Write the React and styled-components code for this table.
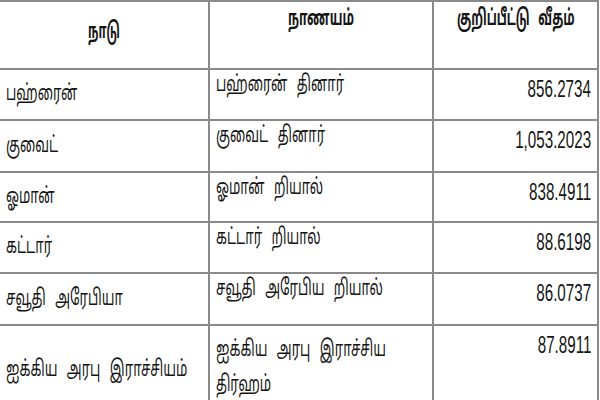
import React from "react";
import styled, { createGlobalStyle } from "styled-components";

const GlobalStyle = createGlobalStyle`
  html, body {
    margin: 0;
    padding: 0;
    background: #ffffff;
  }
  body {
    width: 600px;
    height: 400px;
    overflow: hidden;
  }
`;

const rows = [
  { country: "பஹ்ரைன்", currency: ["பஹ்ரைன் தினார்"], rate: "856.2734", h: 51 },
  { country: "குவைட்", currency: ["குவைட் தினார்"], rate: "1,053.2023", h: 52 },
  { country: "ஓமான்", currency: ["ஓமான் றியால்"], rate: "838.4911", h: 50 },
  { country: "கட்டார்", currency: ["கட்டார் றியால்"], rate: "88.6198", h: 51 },
  { country: "சவூதி அரேபியா", currency: ["சவூதி அரேபிய றியால்"], rate: "86.0737", h: 52 },
  {
    country: "ஐக்கிய அரபு இராச்சியம்",
    currency: ["ஐக்கிய அரபு இராச்சிய", "திர்ஹம்"],
    rate: "87.8911",
    h: 90,
  },
];

const justify = { left: "flex-start", center: "center", right: "flex-end" };

const Sheet = styled.div`
  width: 600px;
  height: 400px;
  overflow: hidden;
`;

const Table = styled.table`
  border-collapse: collapse;
  table-layout: fixed;
  width: 598px;
  font-family: "Noto Sans Tamil", "Lohit Tamil", "Noto Sans", sans-serif;
  color: #151515;
`;

const Cell = styled.td`
  border-top: 2px solid #8a8a8a;
  border-right: 2px solid #8a8a8a;
  padding: ${(p) => p.$pad || "0 6px"};
  vertical-align: ${(p) => p.$valign || "top"};
  font-size: 22px;
  line-height: ${(p) => p.$lh || 35}px;
`;

const HeadCell = styled(Cell).attrs({ as: "th" })`
  font-weight: bold;
  height: 60px;
`;

const Line = styled.div`
  display: flex;
  justify-content: ${(p) => justify[p.$align || "left"]};
  white-space: nowrap;
`;

const Text = styled.span`
  flex: none;
  display: inline-block;
  word-spacing: 10px;
  transform: scaleX(${(p) => p.$scale || 0.6});
  transform-origin: ${(p) => p.$align || "left"} center;
`;

const Rate = styled(Text)`
  font-family: "Liberation Sans", Arial, sans-serif;
  font-size: 23px;
`;

export default function App() {
  return (
    <Sheet>
      <GlobalStyle />
      <Table>
        <colgroup>
          <col style={{ width: 209 }} />
          <col style={{ width: 224 }} />
          <col style={{ width: 165 }} />
        </colgroup>
        <thead>
          <tr>
            <HeadCell $valign="middle" $pad="0 6px 6px">
              <Line $align="center">
                <Text $align="center" $scale={0.53}>நாடு</Text>
              </Line>
            </HeadCell>
            <HeadCell>
              <Line $align="center">
                <Text $align="center" $scale={0.56}>நாணயம்</Text>
              </Line>
            </HeadCell>
            <HeadCell>
              <Line $align="center">
                <Text $align="center" $scale={0.55}>குறிப்பீட்டு வீதம்</Text>
              </Line>
            </HeadCell>
          </tr>
        </thead>
        <tbody>
          {rows.map((r) => {
            const multi = r.currency.length > 1;
            return (
              <tr key={r.rate} style={{ height: r.h }}>
                <Cell $valign="middle">
                  <Line>
                    <Text>{r.country}</Text>
                  </Line>
                </Cell>
                <Cell $pad={multi ? "7px 6px 0" : "1px 6px 0"} $lh={multi ? 35 : 30}>
                  {r.currency.map((line) => (
                    <Line key={line}>
                      <Text>{line}</Text>
                    </Line>
                  ))}
                </Cell>
                <Cell $pad="6px 6px 0" $lh={26}>
                  <Line $align="right">
                    <Rate $align="right" $scale={0.66}>
                      {r.rate}
                    </Rate>
                  </Line>
                </Cell>
              </tr>
            );
          })}
        </tbody>
      </Table>
    </Sheet>
  );
}
